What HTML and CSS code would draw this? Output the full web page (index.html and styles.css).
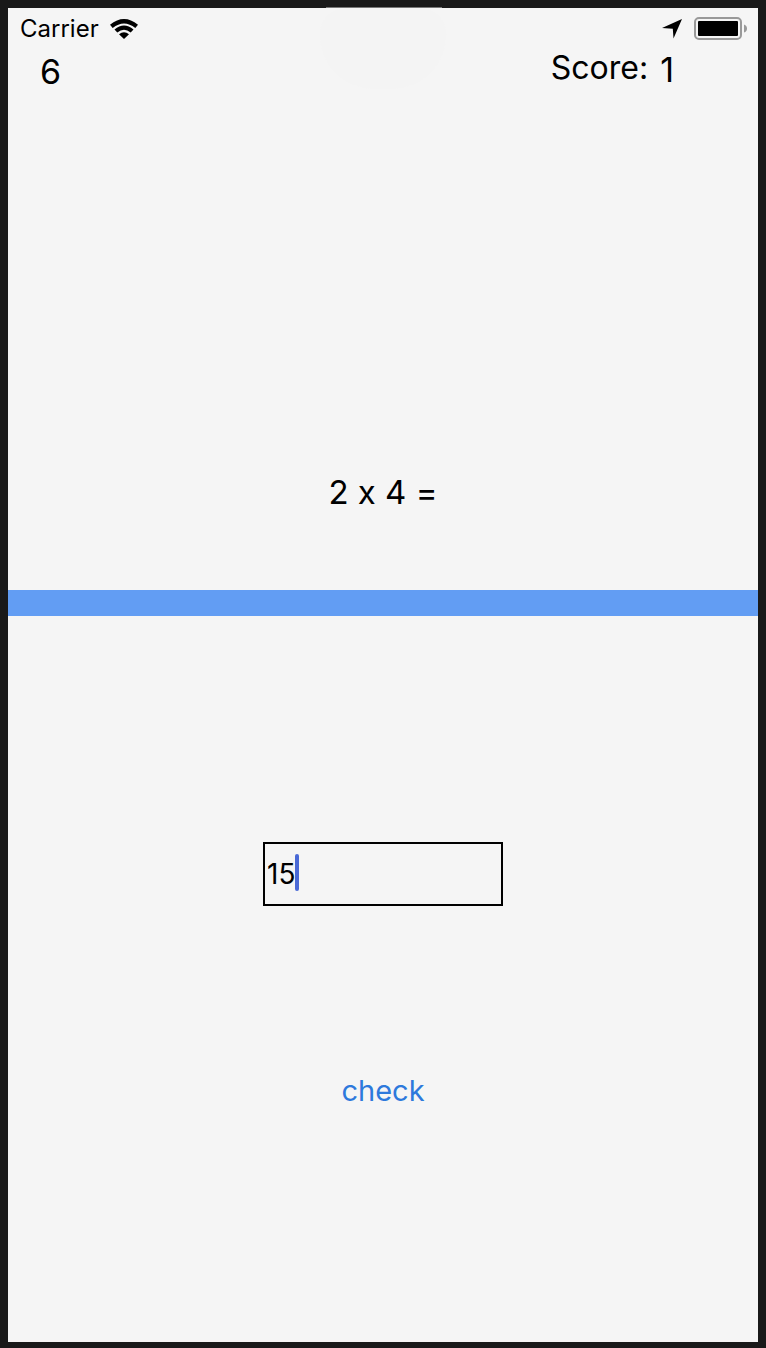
FILE: index.html
```html
<!DOCTYPE html>
<html lang="en">
<head>
<meta charset="utf-8">
<meta name="viewport" content="width=device-width, initial-scale=1">
<title>Multiplication</title>
<link rel="stylesheet" href="styles.css">
</head>
<body>
<main class="screen">
  <section class="question-panel">
    <div class="shade" aria-hidden="true"></div>
    <header class="status">
      <span class="carrier">Carrier</span>
      <svg class="wifi" width="30" height="22" viewBox="0 0 30 22" aria-hidden="true">
        <path d="M1 6.800Q15-4.800 29 6.800L26.300 10Q15 .800 3.700 10Z"/>
        <path d="M5.500 11.400Q15 3.700 24.500 11.400L21.700 14.500Q15 9.200 8.300 14.500Z"/>
        <path d="M10 16.200Q15 12.200 20 16.200L15 21Z"/>
      </svg>
      <span class="spacer"></span>
      <svg class="location" width="20" height="20" viewBox="0 0 20 20" aria-hidden="true">
        <path d="M20 0L11.500 19.500L10.800 9.700L0 9Z"/>
      </svg>
      <svg class="battery" width="54" height="24" viewBox="0 0 54 24" aria-hidden="true">
        <rect x="1" y="1" width="46" height="21" rx="4" fill="none" stroke="#999" stroke-width="2"/>
        <rect x="4" y="4" width="40" height="15" rx="1"/>
        <path d="M50 7.500Q53 8.500 53 11.500T50 15.500Z" fill="#999"/>
      </svg>
    </header>
    <div class="stats">
      <span class="timer">6</span>
      <span class="score-label">Score:</span>
      <span class="score">1</span>
    </div>
    <label class="question" for="answer">2 x 4 =</label>
  </section>
  <div class="divider"></div>
  <form class="answer-panel">
    <div class="field">
      <input class="answer" id="answer" type="text" inputmode="numeric" value="15" autocomplete="off">
      <span class="caret" aria-hidden="true"></span>
    </div>
    <button class="check" type="button">check</button>
  </form>
</main>
</body>
</html>
```
FILE: styles.css
```css
* {
  box-sizing: border-box;
}

body {
  margin: 0;
  background: #191919;
  color: #000;
  font-family: Inter, "Liberation Sans", sans-serif;
  font-variant-ligatures: no-contextual;
}

.screen {
  display: flex;
  flex-direction: column;
  min-height: 100vh;
  border: 8px solid #191919;
  border-bottom-width: 6px;
  background: #f5f5f5;
}

.question-panel {
  position: relative;
  display: flex;
  flex: 582 0 0;
  flex-direction: column;
}

.shade {
  position: absolute;
  top: 0;
  left: 50%;
  width: 126px;
  height: 81px;
  margin-left: -63px;
  border-radius: 30px 30px 63px 63px;
  background: #f4f4f4;
}

.shade::before {
  content: "";
  position: absolute;
  top: -1px;
  left: 6px;
  width: 116px;
  height: 1px;
  background: #777;
}

.status {
  position: relative;
  display: flex;
  align-items: center;
  height: 42px;
  padding: 0 10px 0 12px;
}

.carrier {
  font-size: 24px;
  line-height: 28px;
}

.wifi {
  margin-left: 10px;
}

.spacer {
  flex: 1;
}

.battery {
  margin-left: 12px;
}

.stats {
  position: relative;
  display: flex;
  padding: 0 84px 0 32px;
  font-size: 32px;
  line-height: 36px;
}

.timer {
  margin-top: 4px;
  font-size: 34px;
}

.score-label {
  margin-left: auto;
}

.score {
  margin: 2px 0 0 12px;
  font-size: 34px;
}

.question {
  margin: auto 0 78px;
  font-size: 33px;
  line-height: 40px;
  text-align: center;
}

.divider {
  height: 26px;
  background: #629df3;
}

.answer-panel {
  display: flex;
  flex: 726 0 0;
  flex-direction: column;
  align-items: center;
}

.field {
  position: relative;
  width: 240px;
  margin-top: 226px;
}

.answer {
  display: block;
  width: 100%;
  height: 64px;
  padding: 0 2px;
  border: 2px solid #000;
  border-radius: 0;
  outline: 0;
  background: transparent;
  color: #000;
  font: 28px Inter, "Liberation Sans", sans-serif;
}

.caret {
  position: absolute;
  top: 12px;
  left: 32px;
  width: 4px;
  height: 37px;
  border-radius: 2px;
  background: #4969d6;
}

.check {
  margin-top: 161px;
  padding: 4px 8px;
  border: 0;
  background: none;
  color: #2d79dc;
  font: 29px/40px Inter, "Liberation Sans", sans-serif;
  cursor: pointer;
}
```
